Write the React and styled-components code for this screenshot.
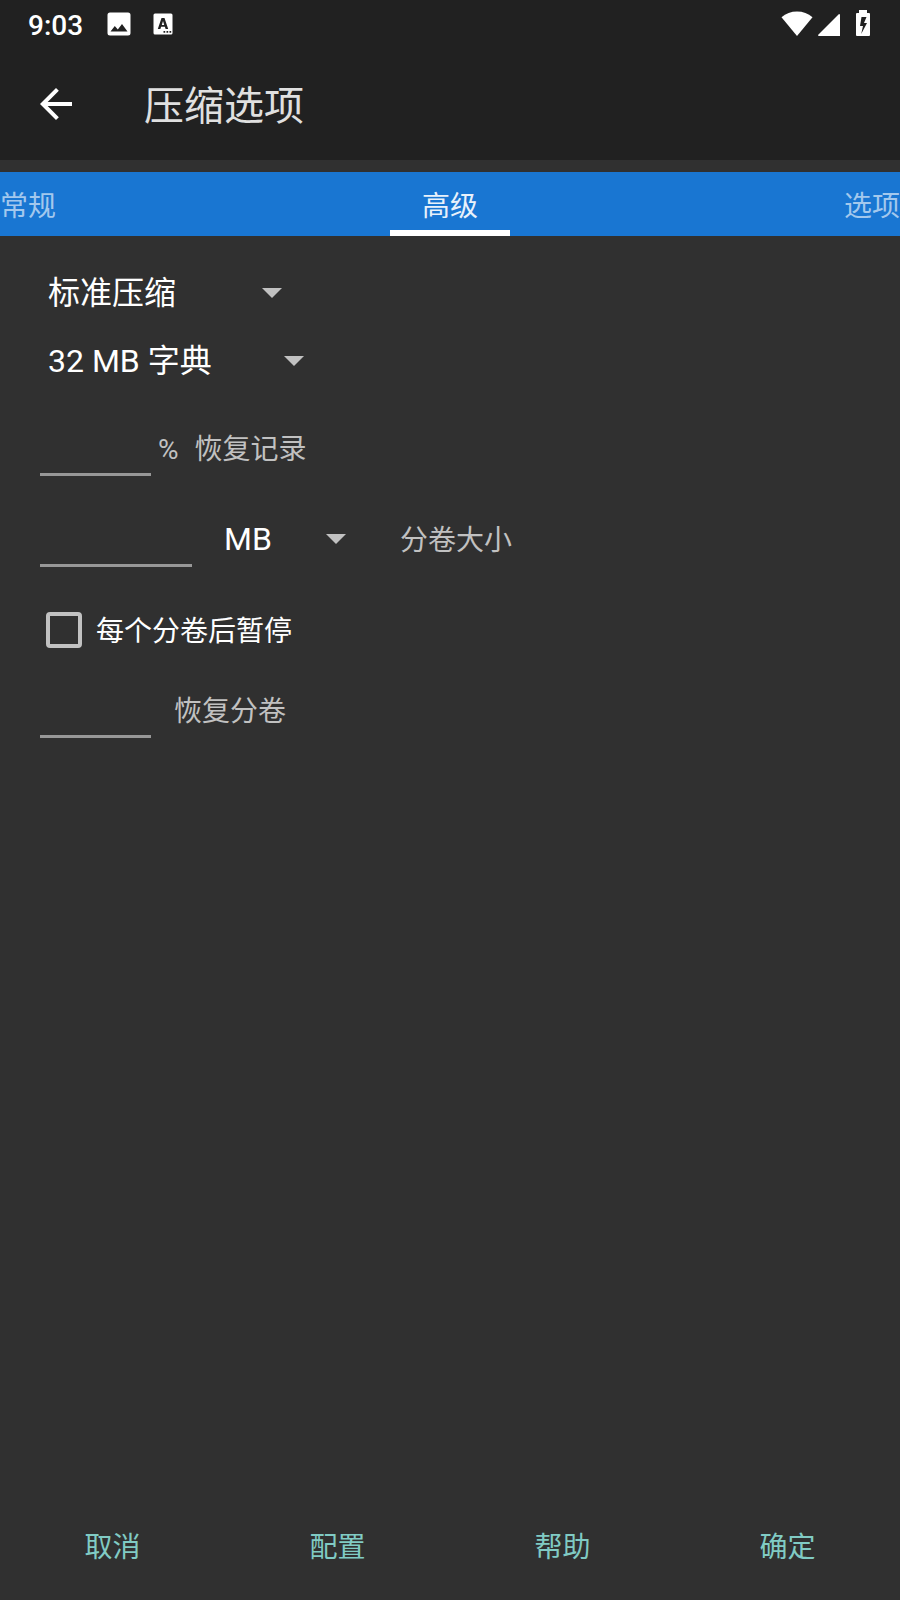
import React, { useState } from "react";
import styled, { createGlobalStyle } from "styled-components";

const GlobalStyle = createGlobalStyle`
  *, *::before, *::after { box-sizing: border-box; }
  body {
    margin: 0;
    background: #303030;
    color: #fff;
    font-family: Roboto, "Noto Sans CJK SC", sans-serif;
    font-size: 28px;
    line-height: 40px;
  }
  button, input, select { font: inherit; color: inherit; }
`;

const Screen = styled.div`
  display: flex;
  flex-direction: column;
  min-height: 100vh;
`;

const StatusBar = styled.div`
  display: flex;
  align-items: center;
  justify-content: space-between;
  height: 48px;
  padding: 0 29px 0 28px;
  background: #212121;
`;

const StatusGroup = styled.div`
  display: flex;
  align-items: center;
  gap: ${(p) => p.$gap}px;
`;

const Clock = styled.span`
  font-weight: 500;
  padding-top: 4px;
`;

const Icon = styled.svg`
  display: block;
  flex: none;
  fill: #fff;
`;

const AppBar = styled.header`
  display: flex;
  align-items: center;
  gap: 64px;
  height: 112px;
  padding: 0 32px;
  background: #212121;
`;

const BackButton = styled.button`
  border: 0;
  padding: 0;
  background: none;
`;

const Title = styled.h1`
  margin: 0;
  padding-top: 6px;
  color: #e0e0e0;
  font-size: 40px;
  font-weight: 400;
  line-height: 56px;
`;

const Tabs = styled.nav`
  display: grid;
  grid-template-columns: 1fr auto 1fr;
  height: 64px;
  margin-top: 12px;
  background: #1976d2;
`;

const Tab = styled.button`
  justify-self: ${(p) => p.$align};
  padding: ${(p) => (p.$active ? "12px 32px 0" : "12px 0 0")};
  border: 0;
  border-bottom: 6px solid ${(p) => (p.$active ? "#fff" : "transparent")};
  background: none;
  color: ${(p) => (p.$active ? "#e8f1fb" : "#a3c8ed")};
`;

const Form = styled.main`
  flex: 1;
  padding: 23px 40px;
`;

const SpinnerBox = styled.div`
  display: grid;
  align-items: center;
  width: ${(p) => p.$width}px;
  height: ${(p) => p.$height}px;
  margin-left: ${(p) => p.$left || 0}px;
  & > * { grid-area: 1 / 1; }
`;

const Select = styled.select`
  appearance: none;
  width: 100%;
  height: 100%;
  padding: 0 8px;
  border: 0;
  background: transparent;
  font-size: 32px;
  option { color: #fff; background: #424242; }
`;

const Arrow = styled.svg`
  justify-self: end;
  width: 20px;
  height: 10px;
  fill: #c1c1c1;
  pointer-events: none;
`;

const Row = styled.div`
  display: flex;
  align-items: center;
  height: 56px;
  margin-top: ${(p) => p.$top}px;
`;

const Field = styled.input`
  width: ${(p) => p.$width}px;
  height: 56px;
  padding: 0 8px;
  border: 0;
  border-bottom: 3px solid #979797;
  background: transparent;
  outline: none;
`;

const Caption = styled.label`
  margin-left: ${(p) => p.$left || 0}px;
  padding-top: 4px;
  color: ${(p) => (p.$strong ? "#fff" : "#c1c1c1")};
`;

const Tick = styled.input`
  appearance: none;
  width: 36px;
  height: 36px;
  margin: 0 14px 0 6px;
  border: 4px solid #c1c1c1;
  border-radius: 4px;
  &:checked { background: #80cbc4; border-color: #80cbc4; }
`;

const Actions = styled.footer`
  display: grid;
  grid-template-columns: repeat(4, 1fr);
  padding-bottom: 4px;
`;

const Action = styled.button`
  height: 96px;
  padding: 0;
  border: 0;
  background: none;
  color: #80cbc4;
`;

function Spinner({ label, value, width, height, left }) {
  return (
    <SpinnerBox $width={width} $height={height} $left={left}>
      <Select aria-label={label} defaultValue={value}>
        <option>{value}</option>
      </Select>
      <Arrow viewBox="0 0 20 10" aria-hidden="true">
        <path d="M0 0h20L10 10z" />
      </Arrow>
    </SpinnerBox>
  );
}

const tabs = [
  { name: "常规", align: "start" },
  { name: "高级", align: "center" },
  { name: "选项", align: "end" },
];

export default function App() {
  const [pause, setPause] = useState(false);
  return (
    <Screen>
      <GlobalStyle />
      <StatusBar>
        <StatusGroup $gap={24}>
          <Clock>9:03</Clock>
          <StatusGroup $gap={22}>
            <Icon width="24" height="24" viewBox="0 0 24 24">
              <path fillRule="evenodd" d="M3 .5h18a2.500 2.500 0 0 1 2.500 2.500v18a2.500 2.500 0 0 1-2.500 2.500H3A2.500 2.500 0 0 1 .5 21V3A2.500 2.500 0 0 1 3 .5zM3.500 19.500h17l-5.500-7.500-4.200 5.500-3-3.500z" />
            </Icon>
            <Icon width="20" height="22" viewBox="0 0 20 22">
              <path fillRule="evenodd" d="M2 .5h16a1.500 1.500 0 0 1 1.500 1.500v18a1.500 1.500 0 0 1-1.500 1.500H2A1.500 1.500 0 0 1 .5 20V2A1.500 1.500 0 0 1 2 .5zM8.500 5L4.800 16h2.600l.7-2.200h3.800l.7 2.200h2.600L11.500 5zM10 8l1.200 3.900H8.800zM10.500 18v1.700h1.700V18zM13.500 18v1.700h1.700V18zM16.500 18v1.700h1.700V18z" />
            </Icon>
          </StatusGroup>
        </StatusGroup>
        <StatusGroup $gap={0}>
          <Icon width="32" height="28" viewBox="0 0 32 28">
            <path d="M.5 7.200Q7 1.500 16 1.500t15.500 5.700L16 26z" />
          </Icon>
          <Icon width="42" height="28" viewBox="0 0 42 28">
            <path d="M27 5q0-1-1-1L5 25q0 1 1 1h21z" />
          </Icon>
          <Icon width="16" height="28" viewBox="0 0 16 28">
            <path fillRule="evenodd" d="M4 0h8v3h2q1 0 1 1v21q0 1-1 1H2q-1 0-1-1V4q0-1 1-1h2zM6.500 7L5 16h3l-1.800 8L12 13H9l2.500-6z" />
          </Icon>
        </StatusGroup>
      </StatusBar>
      <AppBar>
        <BackButton type="button" aria-label="返回">
          <Icon width="48" height="48" viewBox="0 0 24 24">
            <path d="M20 11H7.830l5.590-5.590L12 4l-8 8 8 8 1.410-1.410L7.830 13H20v-2z" />
          </Icon>
        </BackButton>
        <Title>压缩选项</Title>
      </AppBar>
      <Tabs>
        {tabs.map((t) => (
          <Tab key={t.name} type="button" $align={t.align} $active={t.align === "center"}>
            {t.name}
          </Tab>
        ))}
      </Tabs>
      <Form>
        <Spinner label="压缩方式" value="标准压缩" width={242} height={68} />
        <Spinner label="字典大小" value="32 MB 字典" width={264} height={68} />
        <Row $top={25}>
          <Field id="record" $width={111} />
          <Caption htmlFor="record" $left={7}>%</Caption>
          <Caption htmlFor="record" $left={16}>恢复记录</Caption>
        </Row>
        <Row $top={35}>
          <Field id="volume" $width={152} />
          <Spinner label="单位" value="MB" width={130} height={56} left={24} />
          <Caption htmlFor="volume" $left={54}>分卷大小</Caption>
        </Row>
        <Row $top={35}>
          <Tick id="pause" type="checkbox" checked={pause} onChange={(e) => setPause(e.target.checked)} />
          <Caption htmlFor="pause" $strong>每个分卷后暂停</Caption>
        </Row>
        <Row $top={24}>
          <Field id="recovery" $width={111} />
          <Caption htmlFor="recovery" $left={23}>恢复分卷</Caption>
        </Row>
      </Form>
      <Actions>
        <Action type="button">取消</Action>
        <Action type="button">配置</Action>
        <Action type="button">帮助</Action>
        <Action type="button">确定</Action>
      </Actions>
    </Screen>
  );
}
